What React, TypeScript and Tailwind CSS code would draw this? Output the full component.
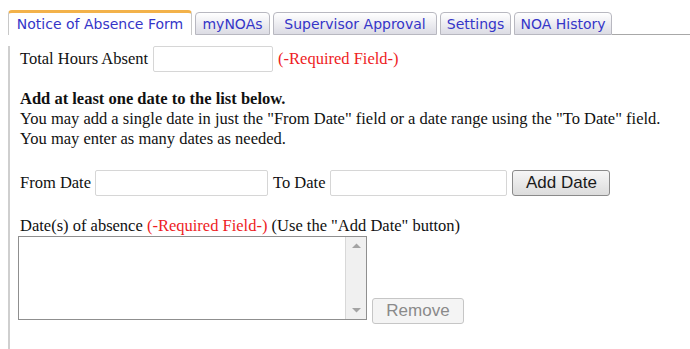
import React from "react";

const tabs = [
  { label: "myNOAs", w: "w-[75px]" },
  { label: "Supervisor Approval", w: "w-[164px]" },
  { label: "Settings", w: "w-[71px]" },
  { label: "NOA History", w: "w-[98px]" },
];

function Scrollbar() {
  return (
    <div className="flex w-[21px] flex-col justify-between border-l border-[#d8d8d8] bg-[#f0f0f0]">
      <svg viewBox="0 0 21 17" className="h-[17px] w-[21px]">
        <path d="M6 11 L10.5 6.5 L15 11 Z" fill="#a3a3a3" />
      </svg>
      <svg viewBox="0 0 21 17" className="h-[17px] w-[21px]">
        <path d="M6 6 L10.5 10.5 L15 6 Z" fill="#a3a3a3" />
      </svg>
    </div>
  );
}

export default function App() {
  const serif = { fontFamily: '"Liberation Serif", "Times New Roman", serif' };
  const sans = { fontFamily: '"Liberation Sans", Arial, sans-serif' };

  return (
    <div className="h-[349px] w-[690px] overflow-hidden bg-white">
      {/* tab strip */}
      <div
        className="flex items-end pl-[8px] pt-[10px] text-[14px] text-[#3535c8]"
        style={{ fontFamily: '"DejaVu Sans", Verdana, sans-serif' }}
      >
        <div className="flex h-[25px] w-[184px] items-center justify-center whitespace-nowrap rounded-t-[4px] border-x border-t-[3px] border-x-[#c8c8c8] border-t-[#f3b24a] bg-white pt-[1px]">
          Notice of Absence Form
        </div>
        {tabs.map((t) => (
          <div
            key={t.label}
            className={`ml-[3px] flex h-[23px] items-center justify-center whitespace-nowrap rounded-t-[4px] border border-[#b8b8c0] bg-gradient-to-b from-white to-[#dcdce4] pt-[1px] ${t.w}`}
          >
            {t.label}
          </div>
        ))}
        <div className="flex-1 border-b border-[#a8a8a8]" />
      </div>

      {/* panel */}
      <div className="ml-[8px] h-[314px] border-l-2 border-[#cfcfcf] pl-[10px] text-[16.5px] text-[#111]" style={serif}>
        <div className="mt-[11px] flex items-center">
          <span>Total Hours Absent</span>
          <div className="ml-[5px] h-[26px] w-[120px] rounded-[2px] border border-[#d6d6d6]" />
          <span className="ml-[5px] text-[#ee1c24]">(-Required Field-)</span>
        </div>

        <div className="mt-[17px] leading-[20px]">
          <div className="font-bold">Add at least one date to the list below.</div>
          <div>You may add a single date in just the "From Date" field or a date range using the "To Date" field.</div>
          <div>You may enter as many dates as needed.</div>
        </div>

        <div className="mt-[21px] flex items-center">
          <span>From Date</span>
          <div className="ml-[4px] h-[26px] w-[173px] rounded-[2px] border border-[#d6d6d6]" />
          <span className="ml-[5px]">To Date</span>
          <div className="ml-[5px] h-[26px] w-[177px] rounded-[2px] border border-[#d6d6d6]" />
          <div
            className="ml-[5px] flex h-[26px] w-[98px] items-center justify-center rounded-[3px] border border-[#8a8a8a] bg-gradient-to-b from-[#f6f6f6] to-[#dcdcdc] text-[17px] text-[#1a1a1a]"
            style={sans}
          >
            Add Date
          </div>
        </div>

        <div className="mt-[20px] leading-[20px]">
          Date(s) of absence <span className="text-[#ee1c24]">(-Required Field-)</span> (Use the "Add Date" button)
        </div>

        <div className="-ml-[2px] flex items-end">
          <div className="flex h-[84px] w-[349px] border border-[#8f8f8f]">
            <div className="flex-1" />
            <Scrollbar />
          </div>
          <div
            className="mb-[-4px] ml-[5px] flex h-[26px] w-[92px] items-center justify-center rounded-[3px] border border-[#c6c6c6] bg-[#f4f4f4] text-[17px] text-[#8a8a8a]"
            style={sans}
          >
            Remove
          </div>
        </div>
      </div>
    </div>
  );
}
